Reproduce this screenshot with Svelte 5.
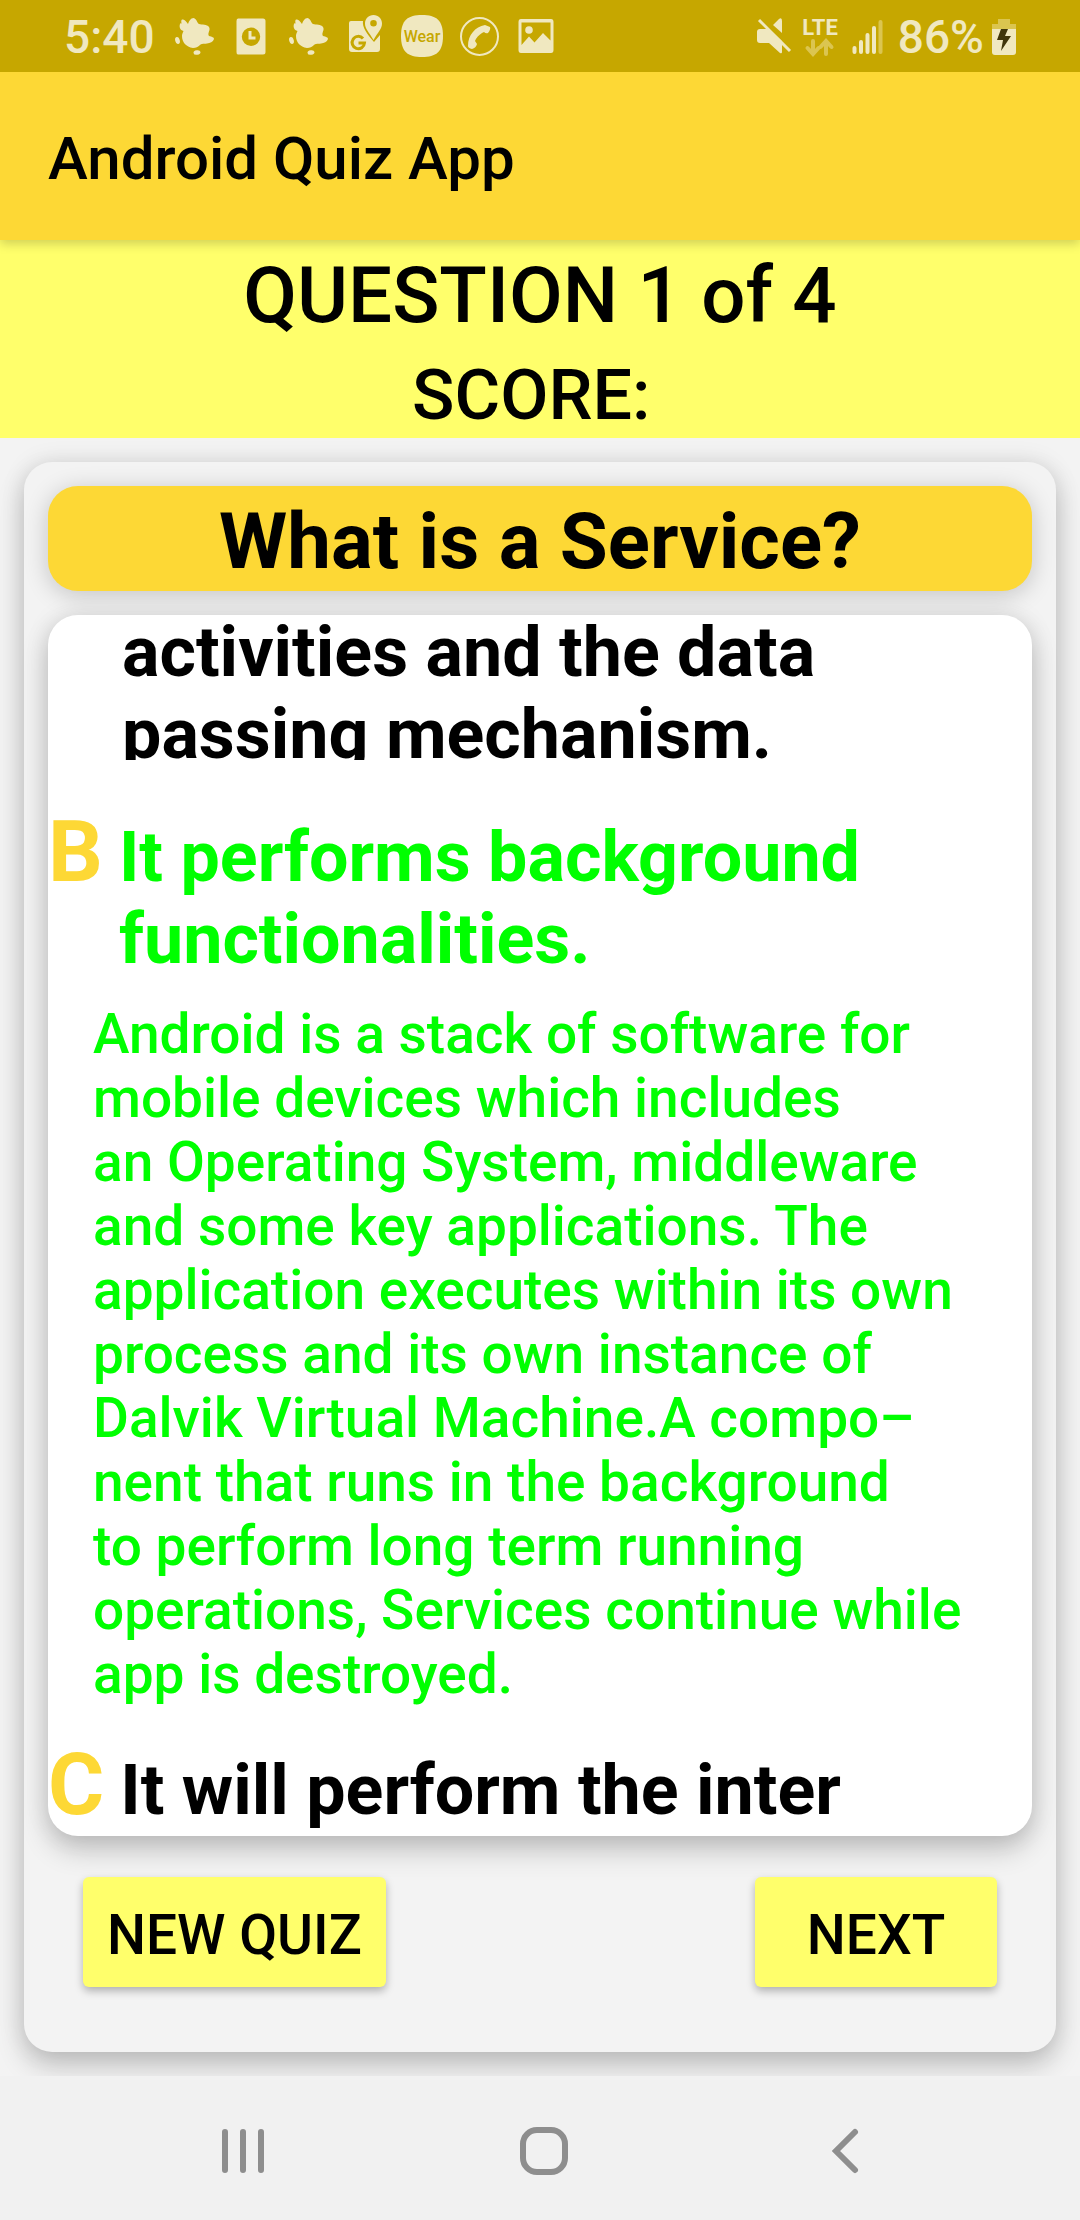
<script>
  const explanation = [
    'Android is a stack of software for',
    'mobile devices which includes',
    'an Operating System, middleware',
    'and some key applications. The',
    'application executes within its own',
    'process and its own instance of',
    'Dalvik Virtual Machine.A compo–',
    'nent that runs in the background',
    'to perform long term running',
    'operations, Services continue while',
    'app is destroyed.'
  ].join('\n');
</script>

{#snippet rose()}
  <svg class="icon" viewBox="0 0 42 42" aria-hidden="true">
    <path d="M9 7C8 4 8 2 9 1.500C11 1 13 3 15 6C16 3 18 0 20.500 0C24 1 24 5 26 6C29 7 34 6 36 9C38 12 34 15 36 18C39 19 41 19 41 21C40 24 37 25 34 25.500C31 26 29 25 27 27C25 29 23 30 20 30C13 29 9 24 9 18C9 16 10 14 10.500 13C7 12 6 9 7 6C7 5 9 5 9 7Z" />
    <ellipse cx="4.500" cy="22.500" rx="2.300" ry="3.500" transform="rotate(-14 4.500 22.500)" />
    <ellipse cx="24" cy="34.500" rx="3.500" ry="2.300" transform="rotate(-8 24 34.500)" />
  </svg>
{/snippet}

<div class="app">
  <div class="status">
    <div class="left">
      <span class="time">5:40</span>
      {@render rose()}
      <svg class="icon" viewBox="0 0 42 42" aria-hidden="true">
        <path fill-rule="evenodd" d="M8 0.500H33Q35.500 0.500 35.500 3V34Q35.500 36.500 33 36.500H8Q6.500 36.500 6.500 34V3Q6.500 0.500 8 0.500ZM21 9.500A9.200 9.200 0 1 0 21 27.900A9.200 9.200 0 1 0 21 9.500Z" />
        <path class="line" d="M20 13V20H25.500" />
      </svg>
      {@render rose()}
      <svg class="icon" viewBox="0 0 42 42" aria-hidden="true">
        <path d="M7 3H19C18 9 23 16 30 24L36 17V31Q36 34 33 34H8Q5 34 5 31V5Q5 3 7 3Z" />
        <path fill-rule="evenodd" d="M29.500 -3C24.500 -3 21 1 21 5.500C21 11 25 14 29.500 22C34 14 38 11 38 5.500C38 1 34.500 -3 29.500 -3ZM29.500 2A3.300 3.300 0 1 1 29.500 8.600A3.300 3.300 0 1 1 29.500 2Z" />
        <path class="cut" d="M19 20.500A6.200 6.200 0 1 0 20.500 25H14.500" />
      </svg>
      <svg class="icon" viewBox="0 0 42 42" aria-hidden="true">
        <path d="M21 -3C35 -3 42 2 42 18C42 34 35 39 21 39C7 39 0 34 0 18C0 2 7 -3 21 -3Z" />
        <text x="21" y="24" text-anchor="middle">Wear</text>
      </svg>
      <svg class="icon" viewBox="0 0 42 42" aria-hidden="true">
        <circle class="line thin" cx="21.500" cy="18.500" r="18.500" />
        <path d="M27 7L32 9Q33 11 30 15Q28 16 26 14L24 15Q19 18 17 23L19 26Q18 30 14 31Q10 30 10 28C10 17 17 9 27 7Z" />
      </svg>
      <svg class="icon" viewBox="0 0 42 42" aria-hidden="true">
        <path fill-rule="evenodd" d="M6 1H36Q38.500 1 38.500 4V32Q38.500 35 36 35H6Q3.500 35 3.500 32V4Q3.500 1 6 1ZM6.500 4.500V27L14 18.500L19.500 24.500L28 15L35.500 22.500V4.500Z" />
        <circle cx="14" cy="12" r="3.800" />
      </svg>
    </div>
    <div class="right">
      <svg width="34" height="38" viewBox="0 0 34 38" aria-hidden="true">
        <path d="M3 11H12L25 23V34Q25 36 23 35L12 25H3Q0 25 0 22V14Q0 11 3 11ZM16 7L22 1Q25 -1 25 3V15Z" />
        <path class="line" d="M2 2L33 33" />
      </svg>
      <div class="network">
        <span>LTE</span>
        <svg width="28" height="19" viewBox="0 0 28 19" aria-hidden="true">
          <path class="line faint wide" d="M7 3V15M1.500 10L7 16L12.500 10M20 16V4M14.500 9L20 3L25.500 9" />
        </svg>
      </div>
      <svg class="signal" width="32" height="36" viewBox="0 0 32 36" aria-hidden="true">
        <path class="line wide" d="M2.500 29V33M9 23V33M15.500 16V33M22 9V33" />
        <path class="line faint wide" d="M28.500 3V33" />
      </svg>
      <span class="percent">86%</span>
      <svg width="24" height="38" viewBox="0 0 24 38" aria-hidden="true">
        <path class="dim" d="M6 1H18V6H24V12H0V6H6Z" />
        <path d="M0 11H24V34Q24 37 21 37H3Q0 37 0 34Z" />
        <path class="bolt" d="M9 11H16L13 18H19L9 33L11 22H5Z" />
      </svg>
    </div>
  </div>

  <header><h1>Android Quiz App</h1></header>

  <div class="progress">
    <p class="count">QUESTION 1 of 4</p>
    <p class="score">SCORE:&nbsp;</p>
  </div>

  <main>
    <section class="card">
      <h2>What is a Service?</h2>
      <div class="answers">
        <div class="option scrolled">
          <p>activities and the data<br />passing mechanism.</p>
        </div>
        <div class="option">
          <span class="letter">B</span>
          <p class="correct">It performs background<br />functionalities.</p>
        </div>
        <p class="explanation">{explanation}</p>
        <div class="option">
          <span class="letter">C</span>
          <p>It will perform the inter</p>
        </div>
      </div>
      <div class="actions">
        <button type="button">NEW QUIZ</button>
        <button type="button">NEXT</button>
      </div>
    </section>
  </main>

  <nav>
    <button type="button" aria-label="Recent apps">
      <svg width="48" height="52" viewBox="0 0 48 52"><path d="M6 7V45M24 7V45M42 7V45" /></svg>
    </button>
    <button type="button" aria-label="Home">
      <svg width="52" height="52" viewBox="0 0 52 52"><rect x="5" y="5" width="42" height="42" rx="14" /></svg>
    </button>
    <button type="button" aria-label="Back">
      <svg width="48" height="52" viewBox="0 0 48 52"><path d="M34 7L15 26L34 45" /></svg>
    </button>
  </nav>
</div>

<style>
  :global(body) {
    margin: 0;
  }
  .app {
    display: flex;
    flex-direction: column;
    height: 100vh;
    background: #f3f3f3;
    color: #000;
    font-family: Roboto, 'Liberation Sans', sans-serif;
  }
  h1,
  h2,
  p {
    margin: 0;
  }
  .status {
    flex: none;
    z-index: 2;
    display: flex;
    justify-content: space-between;
    align-items: center;
    box-sizing: border-box;
    height: 72px;
    padding: 2px 64px 0;
    background: #c6a700;
    color: #f0e8c0;
  }
  .status svg {
    flex: none;
    fill: #f0e8c0;
    overflow: visible;
  }
  .status .line {
    fill: none;
    stroke: #f0e8c0;
    stroke-width: 3;
  }
  .status .thin {
    stroke-width: 2;
  }
  .status .wide {
    stroke-width: 4;
    stroke-linecap: round;
  }
  .status .faint {
    stroke: #dbc550;
  }
  .status .dim {
    fill: #dbc550;
  }
  .status .cut {
    fill: none;
    stroke: #c6a700;
    stroke-width: 3;
  }
  .status .bolt {
    fill: #40360a;
  }
  .status text {
    fill: #c6a700;
    font-size: 16px;
    font-weight: 500;
  }
  .left,
  .right {
    display: flex;
    align-items: center;
  }
  .left {
    gap: 15px;
  }
  .icon {
    width: 42px;
    height: 42px;
    margin-top: 4px;
  }
  .time,
  .percent {
    font-size: 46px;
    font-weight: 500;
    line-height: 52px;
  }
  .time {
    margin-right: 3px;
  }
  .right {
    gap: 8px;
  }
  .network {
    display: flex;
    flex-direction: column;
    align-items: center;
    margin-left: 3px;
    font-size: 22px;
    font-weight: 700;
    line-height: 20px;
  }
  .signal {
    margin: 0 6px;
  }
  header {
    flex: none;
    z-index: 1;
    display: flex;
    align-items: center;
    box-sizing: border-box;
    height: 168px;
    padding: 5px 48px 0;
    background: #fdd835;
    box-shadow: 0 4px 10px rgba(0, 0, 0, 0.18);
  }
  h1 {
    font-size: 60px;
    font-weight: 500;
    line-height: 72px;
  }
  .progress {
    flex: none;
    display: flex;
    flex-direction: column;
    gap: 12px;
    padding: 10px 0 2px;
    background: #ffff6b;
    text-align: center;
    font-weight: 500;
  }
  .count {
    font-size: 78px;
    line-height: 92px;
  }
  .score {
    font-size: 70px;
    line-height: 82px;
  }
  main {
    flex: 1;
    min-height: 0;
    display: flex;
    padding: 24px;
    overflow: hidden;
  }
  .card {
    flex: 1;
    min-width: 0;
    display: flex;
    flex-direction: column;
    gap: 24px;
    padding: 24px;
    border-radius: 28px;
    background: #f3f3f3;
    box-shadow: 0 14px 28px rgba(0, 0, 0, 0.2), 0 0 24px rgba(0, 0, 0, 0.1);
  }
  h2 {
    padding: 10px 0 3px;
    border-radius: 30px;
    background: #fdd835;
    box-shadow: 0 4px 24px rgba(0, 0, 0, 0.2);
    font-size: 78px;
    font-weight: 700;
    line-height: 92px;
    text-align: center;
  }
  .answers {
    flex: 1;
    min-height: 0;
    overflow: hidden;
    border-radius: 30px;
    background: #fff;
    box-shadow: 0 14px 28px rgba(0, 0, 0, 0.2), 0 0 24px rgba(0, 0, 0, 0.1);
  }
  .option {
    display: flex;
    align-items: baseline;
    gap: 16px;
    font-size: 70px;
    font-weight: 700;
    line-height: 82px;
  }
  .scrolled {
    height: 149px;
    margin: -4px 0 42px;
    padding-left: 74px;
    overflow: hidden;
  }
  .letter {
    color: #fdd835;
    font-size: 86px;
    line-height: 100px;
  }
  .correct,
  .explanation {
    color: #0f0;
  }
  .explanation {
    padding: 22px 44px 29px 45px;
    font-size: 55px;
    font-weight: 500;
    line-height: 64px;
    white-space: pre-line;
  }
  .actions {
    display: flex;
    justify-content: space-between;
    padding: 17px 35px 41px;
  }
  .actions button {
    min-width: 242px;
    height: 110px;
    padding: 6px 24px 0;
    border: 0;
    border-radius: 6px;
    background: #ffff6b;
    box-shadow: 0 4px 8px rgba(0, 0, 0, 0.28);
    color: #000;
    font: 500 55px/64px Roboto, 'Liberation Sans', sans-serif;
  }
  nav {
    flex: none;
    z-index: 1;
    display: flex;
    justify-content: space-around;
    align-items: center;
    box-sizing: border-box;
    height: 144px;
    padding: 6px 86px 0 94px;
    background: #f1f1f1;
  }
  nav button {
    display: flex;
    padding: 24px;
    border: 0;
    background: none;
  }
  nav svg {
    fill: none;
    stroke: #8e8e8e;
    stroke-width: 6;
    stroke-linecap: round;
  }
</style>
